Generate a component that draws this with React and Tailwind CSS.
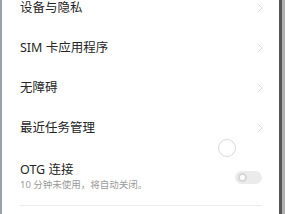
import { ChevronRight } from 'lucide-react';

const rows = ['设备与隐私', 'SIM 卡应用程序', '无障碍', '最近任务管理'];

export default function App() {
  return (
    <div
      className="relative w-[285px] h-[214px] overflow-hidden bg-white flex"
      style={{ fontFamily: '"Noto Sans", "Noto Sans CJK SC", sans-serif' }}
    >
      <div className="w-[2px] h-full bg-[#9aa3ab]" />
      <div className="flex-1 flex flex-col mt-[-12px]">
        {rows.map((r) => (
          <div key={r} className="h-[40px] flex items-center pl-[18px] pr-[11px] justify-between">
            <span className="text-[12.5px] text-[#262626]">{r}</span>
            <ChevronRight size={16} strokeWidth={1.2} className="text-[#cfcfcf]" />
          </div>
        ))}
        <div className="h-[42px] flex items-center pl-[18px] pr-[17px] justify-between mt-[8px]">
          <div className="flex flex-col">
            <span className="text-[12.5px] leading-[16px] text-[#262626]">OTG 连接</span>
            <span className="text-[9.5px] leading-[14px] text-[#9a9a9a]">10 分钟未使用，将自动关闭。</span>
          </div>
          <div className="w-[27px] h-[13px] mt-[1px] rounded-full bg-[#ebebeb] flex items-center pl-[3px]">
            <div className="w-[9px] h-[9px] rounded-full bg-white border-[2px] border-[#d6d6d6]" />
          </div>
        </div>
        <div className="mt-[7px] ml-[18px] mr-[17px] h-px bg-[#ececec]" />
      </div>
      <div className="w-[3px] h-full bg-[#555]" />
      <div className="w-[3px] h-full bg-[#b0b0b0]" />
      <div className="absolute left-[218px] top-[139px] w-[18px] h-[18px] rounded-full border border-[#d8d8e2]" />
    </div>
  );
}
